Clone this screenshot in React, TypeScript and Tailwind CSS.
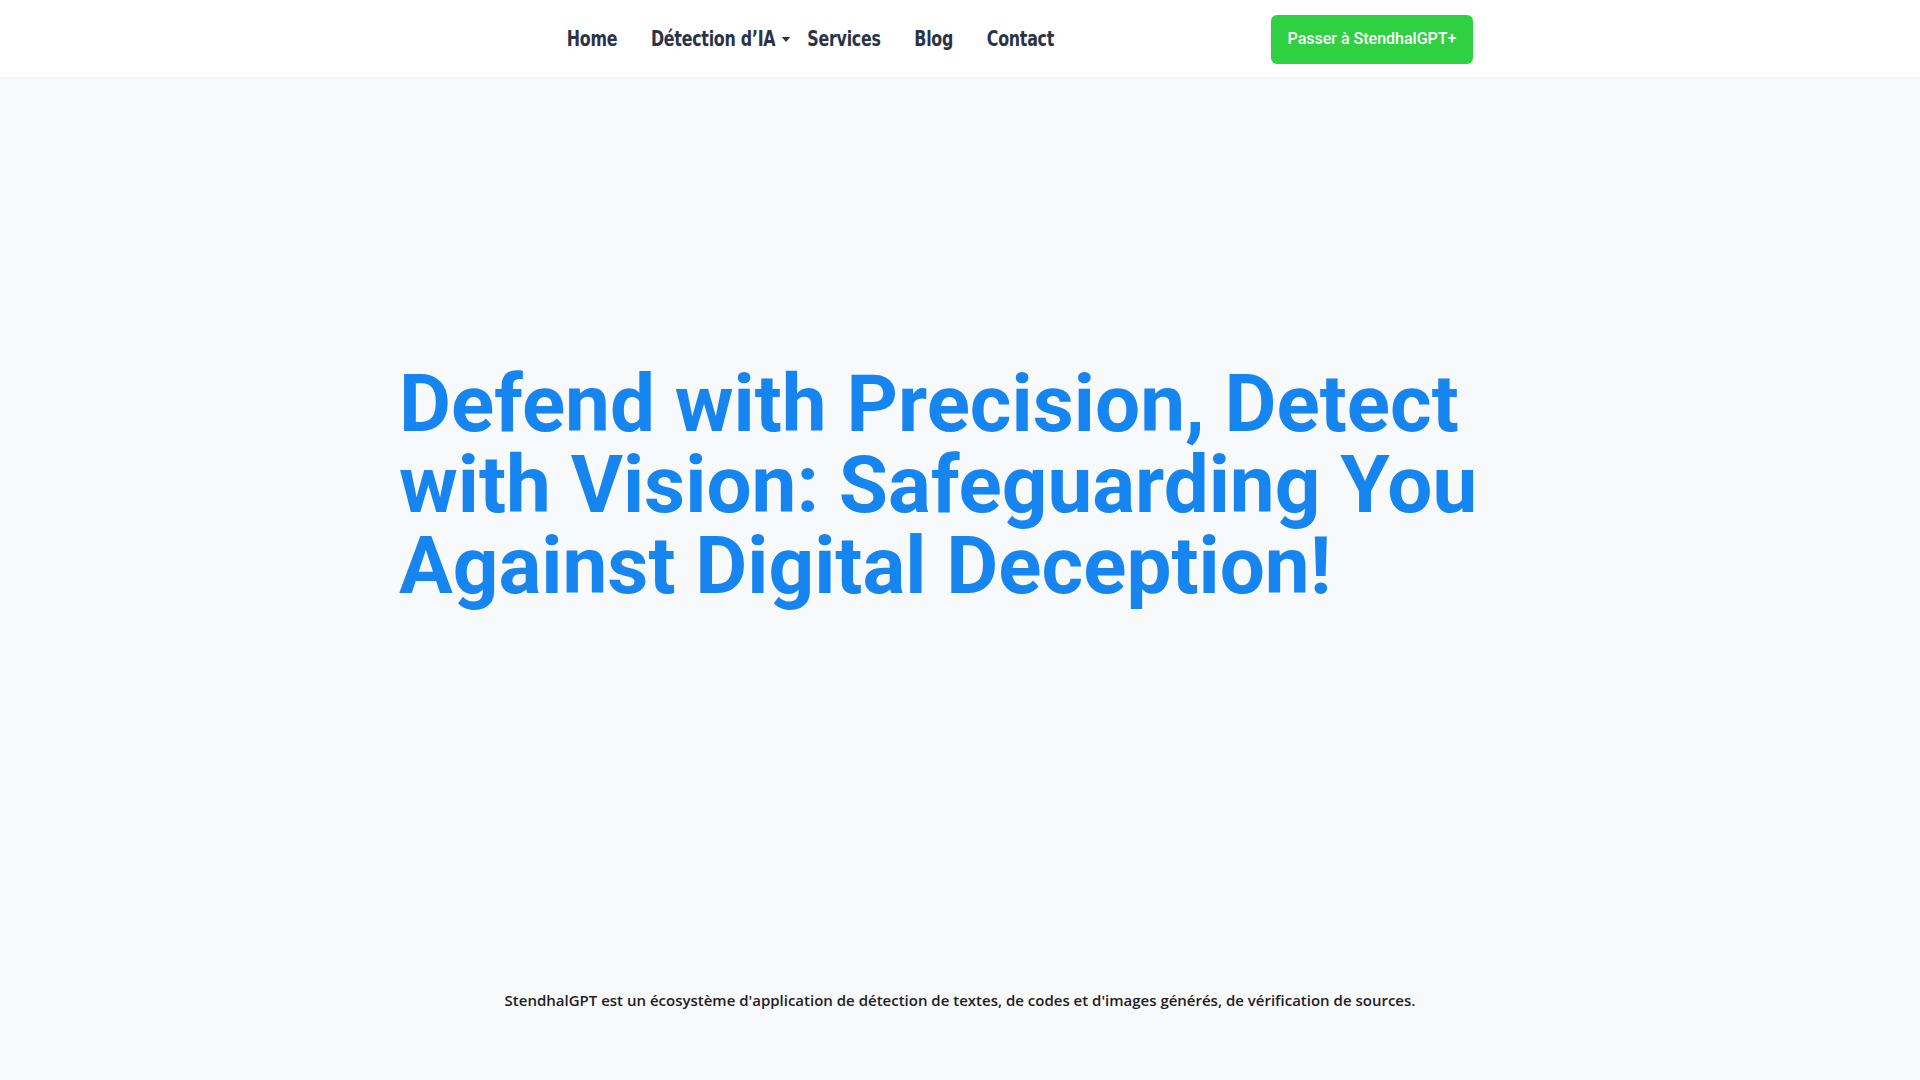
const navItems = ["Home", "Détection d’IA", "Services", "Blog", "Contact"];

export default function App() {
  return (
    <div className="min-h-screen bg-[#f8f9fb]">
      <header className="h-[78px] bg-white border-b border-[#f1f2f4]">
        <div className="h-full flex items-center">
          <div className="ml-[550px] w-[600px]">
            <nav className="flex w-max items-center mt-[2px] origin-left scale-x-[0.84] whitespace-nowrap font-['DejaVu_Sans_Condensed','Roboto',sans-serif] font-bold text-[21px] text-[#2b3347]">
              {navItems.map((item) => (
                <a key={item} href="#" className="flex items-center px-[20px] tracking-[-0.3px]">
                  {item}
                  {item === "Détection d’IA" && (
                    <span className="ml-[8px] -mr-[20px] w-0 h-0 border-l-[5px] border-r-[5px] border-t-[5px] border-l-transparent border-r-transparent border-t-[#2b3347]" />
                  )}
                </a>
              ))}
            </nav>
          </div>
          <a
            href="#"
            className="ml-auto mr-[447px] mt-[1px] h-[49px] w-[202px] flex items-center justify-center rounded-[6px] bg-[#2fd042] text-white text-[16px] font-medium font-['Roboto',sans-serif]"
          >
            Passer à StendhalGPT+
          </a>
        </div>
      </header>

      <section className="pt-[286px] pb-[382px]">
        <h1 className="w-[1122px] mx-auto font-['Roboto',sans-serif] font-bold text-[80px] leading-[81px] text-[#1685f0]">
          Defend with Precision, Detect with Vision: Safeguarding You Against Digital Deception!
        </h1>
      </section>

      <footer className="pb-[50px]">
        <p className="text-center font-['Open_Sans',sans-serif] font-semibold text-[15px] text-[#1f2124]">
          StendhalGPT est un écosystème d'application de détection de textes, de codes et d'images générés, de vérification de sources.
        </p>
      </footer>
    </div>
  );
}
